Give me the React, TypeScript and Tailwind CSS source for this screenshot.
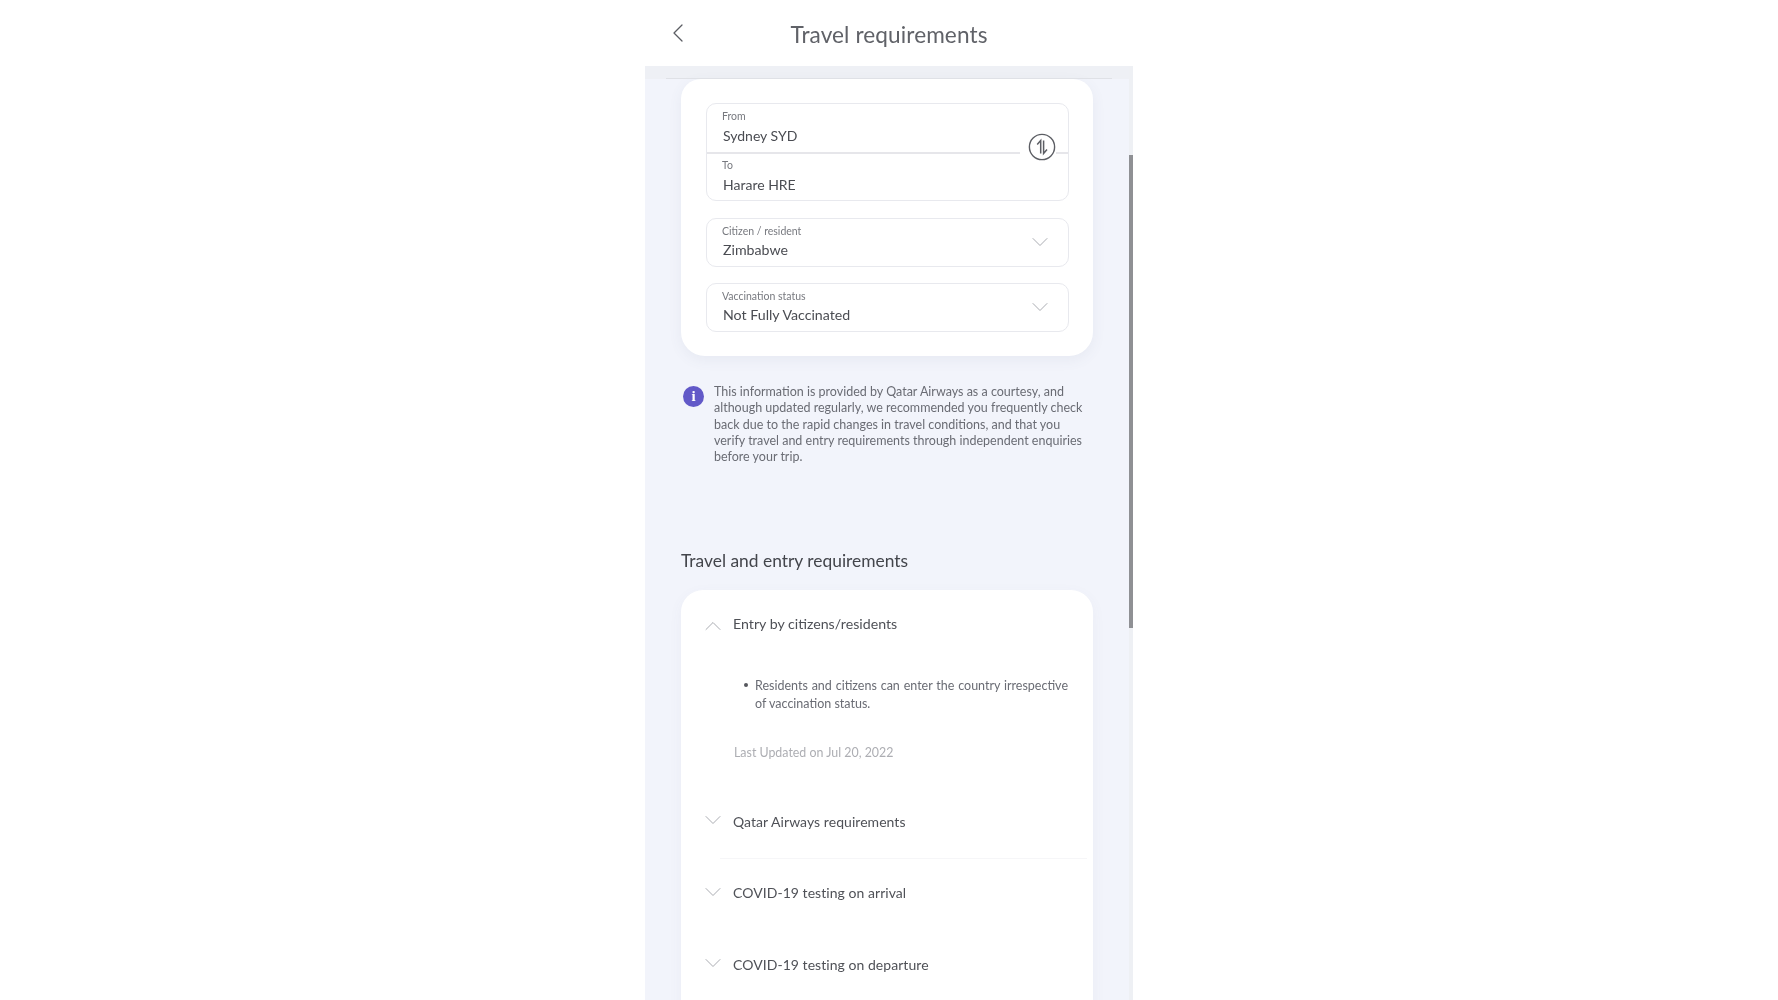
import { ChevronDown, ChevronLeft, ChevronUp } from 'lucide-react'

const font = "font-['Lato','Noto_Sans',sans-serif]"

const SelectField = ({ label, value }: { label: string; value: string }) => (
    <div className="flex h-[49px] items-center justify-between rounded-[10px] border border-[#e8e9ee] bg-white pr-[14px] pl-[15px]">
        <div className="pb-[2px]">
            <p className="text-[10.5px] leading-[14px] text-[#77797f]">{label}</p>
            <p className="mt-[3px] pl-px text-[14.2px] leading-[18px] text-[#4a4c52]">{value}</p>
        </div>
        <ChevronDown className="h-[28px] w-[28px] -translate-y-px text-[#a9abb1]" strokeWidth={0.85} />
    </div>
)

const AccordionRow = ({ title, divider }: { title: string; divider?: boolean }) => (
    <div className="relative flex h-[71.5px] items-center pl-[18px]">
        <ChevronDown className="h-[28px] w-[28px] -translate-y-px text-[#a9abb1]" strokeWidth={0.85} />
        <p className="ml-[6px] text-[14px] tracking-[0.05px] text-[#4f5157]">{title}</p>
        {divider && <div className="absolute right-[6px] -bottom-[2px] left-[39px] h-px bg-[#f6f6f8]" />}
    </div>
)

const App = () => {
    return (
        <div className={`flex h-screen justify-center overflow-hidden bg-white blur-[0.4px] ${font}`}>
            <div className="relative w-[488px]">
                <header className="relative flex h-[66px] items-center justify-center">
                    <ChevronLeft className="absolute top-[17px] left-[17px] h-[32px] w-[32px] text-[#5b5d63]" strokeWidth={0.95} />
                    <h1 className="pt-[3px] text-[22.6px] tracking-[0.1px] text-[#606268]">Travel requirements</h1>
                </header>

                <main className="h-[934px] overflow-hidden bg-[#f2f4fb]">
                    <div className="flex h-[13px] justify-center bg-[#eef0f5]">
                        <div className="mt-[12px] h-px w-[446px] bg-[#dfe1e6]" />
                    </div>

                    <div className="pr-[40px] pl-[36px]">
                        <section className="rounded-b-[24px] rounded-t-[20px] bg-white pt-[24px] pr-[24px] pb-[24px] pl-[25px] shadow-[0_4px_14px_rgba(90,95,130,0.07)]">
                            <div className="relative h-[98px] rounded-[10px] border border-[#e8e9ee]">
                                <div className="flex h-[48px] flex-col justify-center pb-[2px] pl-[15px]">
                                    <p className="text-[10.5px] leading-[14px] text-[#77797f]">From</p>
                                    <p className="mt-[4px] pl-px text-[14px] leading-[18px] text-[#4a4c52]">Sydney SYD</p>
                                </div>
                                <div className="mr-[48px] h-[2px] bg-[#e6e6ea]" />
                                <div className="flex h-[46px] flex-col justify-center pb-[2px] pl-[15px]">
                                    <p className="text-[10.5px] leading-[14px] text-[#77797f]">To</p>
                                    <p className="mt-[4px] pl-px text-[14px] leading-[18px] text-[#4a4c52]">Harare HRE</p>
                                </div>
                                <div className="absolute top-[48px] right-0 h-[2px] w-[14px] bg-[#e6e6ea]" />
                                <svg className="absolute top-[29px] right-[12px] h-[28px] w-[28px] bg-white" viewBox="0 0 28 28" fill="none" stroke="#5c5e64">
                                    <circle cx="14" cy="14" r="12.6" strokeWidth="1.4" />
                                    <path d="M12.7 20.5V7.5L9.2 11.4" strokeWidth="1.5" />
                                    <path d="M15.6 7.5V20.5L19 16.6" strokeWidth="1.5" />
                                </svg>
                            </div>
                            <div className="mt-[17px] flex flex-col gap-[16px]">
                                <SelectField label="Citizen / resident" value="Zimbabwe" />
                                <SelectField label="Vaccination status" value="Not Fully Vaccinated" />
                            </div>
                        </section>

                        <div className="mt-[28px] flex">
                            <span className="mt-[2px] ml-[2px] flex h-[21px] w-[21px] shrink-0 items-center justify-center rounded-full bg-[#6259c8] font-['Liberation_Serif',serif] text-[15px] font-bold text-white">
                                i
                            </span>
                            <p className="ml-[10px] w-[373px] text-[12.5px] leading-[16.3px] text-[#6a6c74]">
                                This information is provided by Qatar Airways as a courtesy, and although updated regularly, we recommended you frequently check back due to the rapid changes in travel conditions, and that you verify travel and entry requirements through independent enquiries before your trip.
                            </p>
                        </div>

                        <h2 className="mt-[84px] text-[17.4px] leading-[24px] text-[#43454b]">Travel and entry requirements</h2>

                        <section className="mt-[17px] rounded-t-[22px] bg-white pb-[60px] shadow-[0_4px_14px_rgba(90,95,130,0.05)]">
                            <div className="flex items-center pt-[20px] pl-[18px]">
                                <ChevronUp className="h-[28px] w-[28px] translate-y-[2px] text-[#a9abb1]" strokeWidth={0.85} />
                                <p className="ml-[6px] text-[14.2px] leading-[22px] text-[#4f5157]">Entry by citizens/residents</p>
                            </div>
                            <div className="mt-[39px] flex pr-[25px] pl-[63px]">
                                <span className="mt-[6px] h-[4px] w-[4px] shrink-0 rounded-full bg-[#55575d]" />
                                <p className="ml-[7px] text-justify text-[12.5px] leading-[17.5px] text-[#6a6c74]">
                                    Residents and citizens can enter the country irrespective of vaccination status.
                                </p>
                            </div>
                            <p className="mt-[32px] pl-[53px] text-[12.4px] leading-[18px] text-[#adaeb3]">Last Updated on Jul 20, 2022</p>
                            <div className="mt-[23px]">
                                <AccordionRow title="Qatar Airways requirements" divider />
                                <AccordionRow title="COVID-19 testing on arrival" />
                                <AccordionRow title="COVID-19 testing on departure" divider />
                            </div>
                        </section>
                    </div>
                </main>

                {/* scrollbar track and thumb sit over the panel */}
                <div className="absolute top-[66px] right-0 bottom-0 w-[4px] bg-[#eef0f4]">
                    <div className="mt-[89px] h-[473px] bg-[#8f9094]" />
                </div>
            </div>
        </div>
    )
}

export default App
